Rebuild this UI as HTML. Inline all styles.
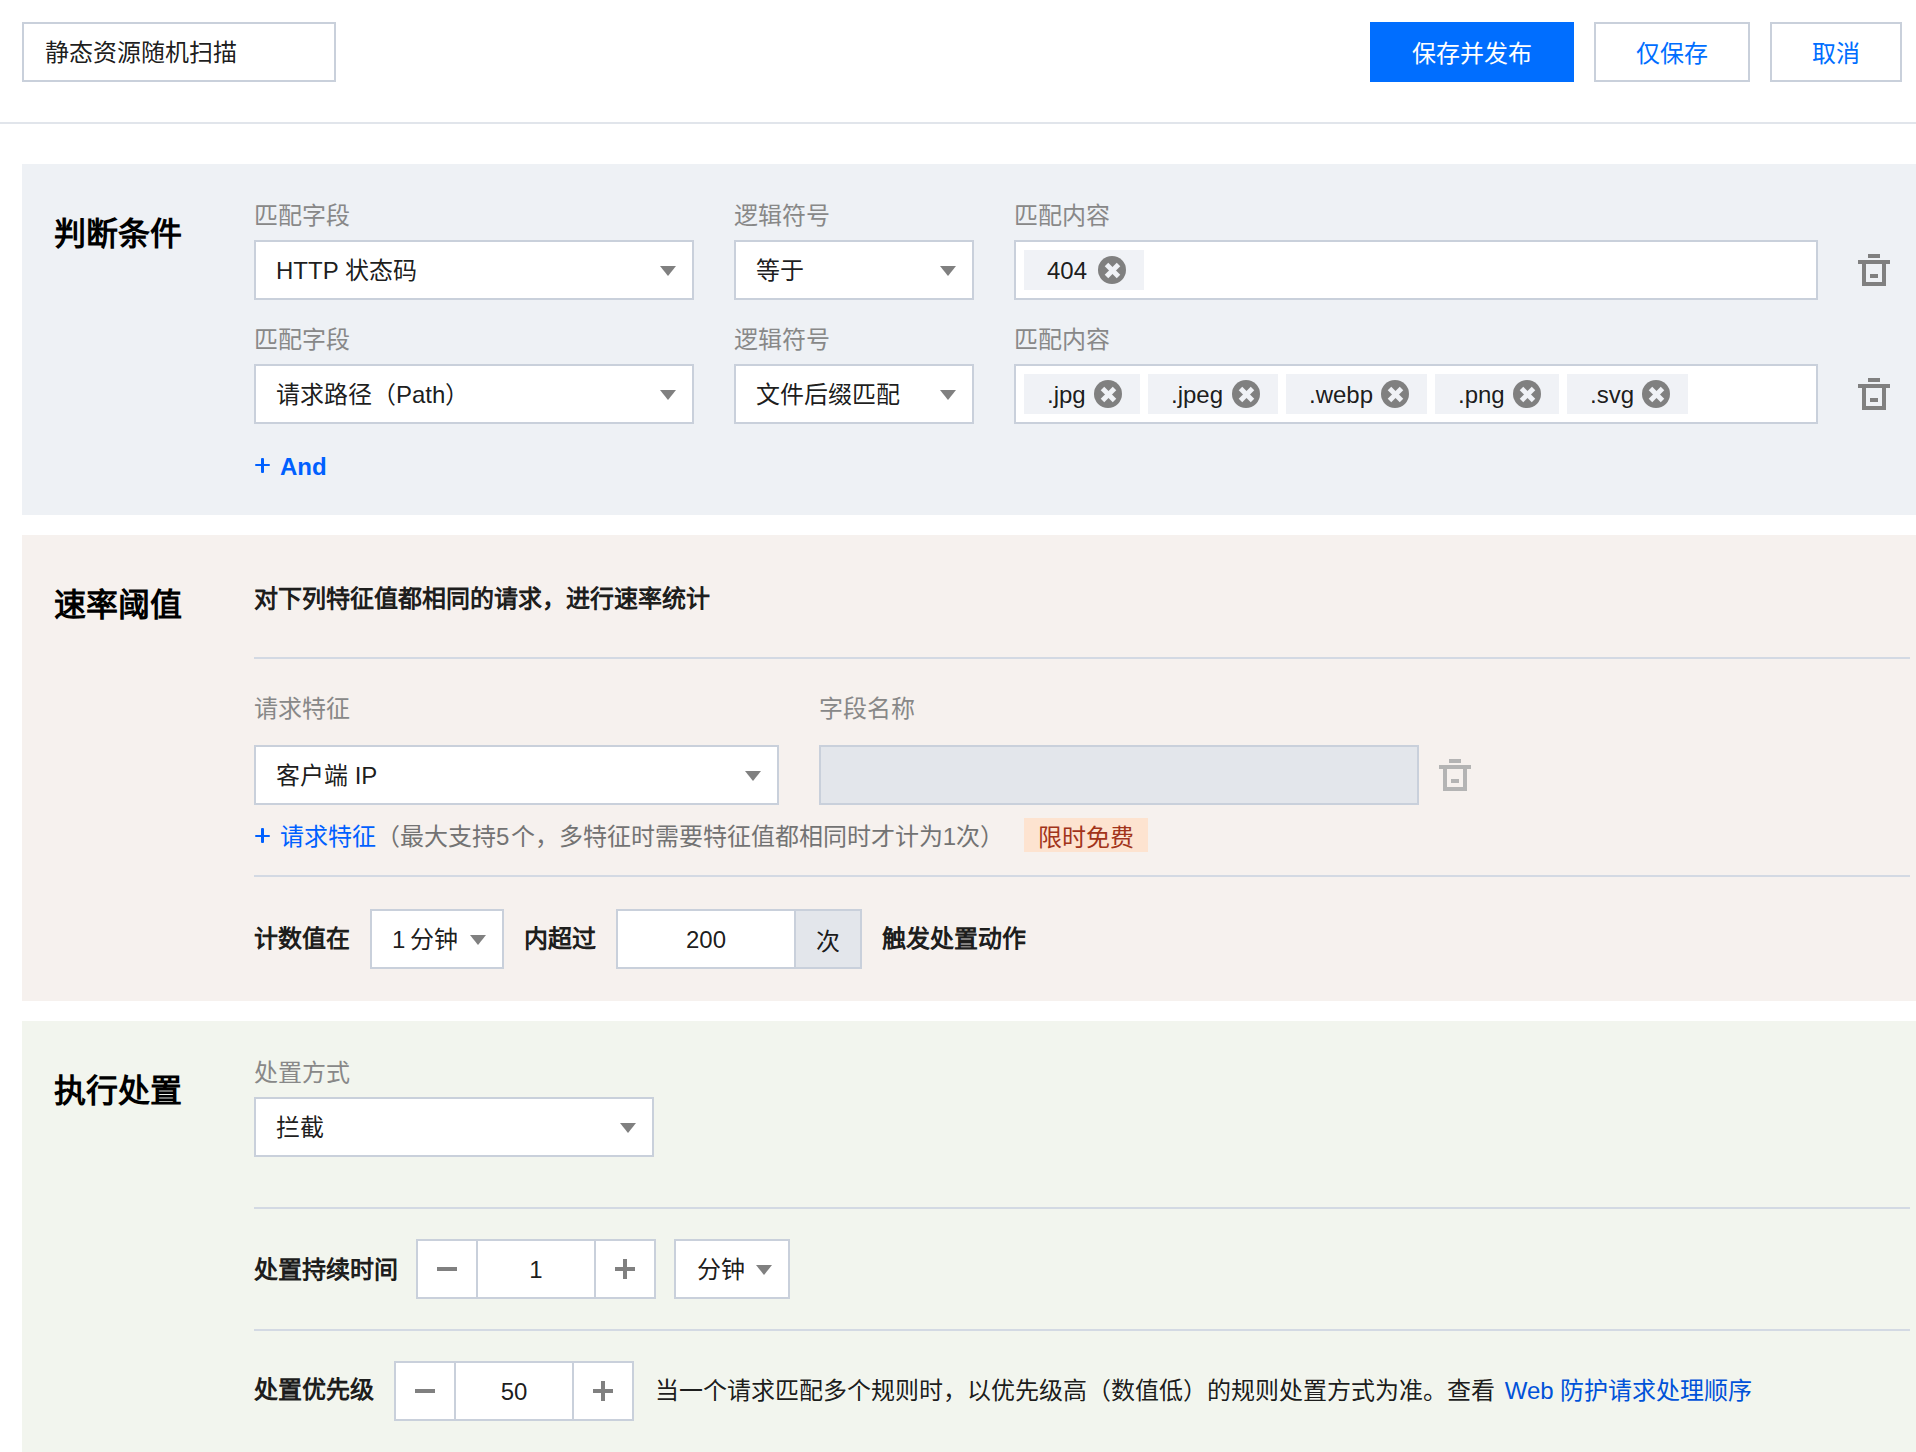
<!DOCTYPE html>
<html lang="zh-CN">
<head>
<meta charset="utf-8">
<style>
*{box-sizing:border-box;margin:0;padding:0}
html,body{width:1916px;height:1452px;overflow:hidden;background:#fff}
body{position:relative;font-family:"Liberation Sans",sans-serif;font-size:24px;color:rgba(0,0,0,.9)}
.a{position:absolute}
.box{position:absolute;border:2px solid #c9d0db;background:#fff;height:60px}
.t{position:absolute;white-space:nowrap;line-height:32px}
.lbl{color:#888}
.b{font-weight:bold}
.sec{position:absolute;left:22px;width:1894px}
.ttl{position:absolute;left:54px;font-size:32px;font-weight:bold;line-height:40px;white-space:nowrap;color:#000}
.hr{position:absolute;left:254px;width:1656px;height:2px;background:#d3d9e3}
.arr{position:absolute;width:0;height:0;border-left:8px solid transparent;border-right:8px solid transparent;border-top:10px solid #808080}
.tag{position:absolute;top:8px;height:40px;background:#f0f2f6}
.tag .t{top:5px;left:23px}
.x{position:absolute;top:6px;width:28px;height:28px;border-radius:50%;background:#808080}
.x:before,.x:after{content:"";position:absolute;left:5.5px;top:11.5px;width:17px;height:5px;background:#f0f2f6}
.x:before{transform:rotate(45deg)}
.x:after{transform:rotate(-45deg)}
.trash{position:absolute;width:32px;height:32px}
.link{color:#0060ff}
</style>
</head>
<body>
<!-- header -->
<div class="box" style="left:22px;top:22px;width:314px"><span class="t" style="left:21px;top:13px">静态资源随机扫描</span></div>
<div class="a" style="left:1370px;top:22px;width:204px;height:60px;background:#006eff;color:#fff;text-align:center;line-height:63px">保存并发布</div>
<div class="box" style="left:1594px;top:22px;width:156px;color:#006eff;text-align:center;line-height:59px">仅保存</div>
<div class="box" style="left:1770px;top:22px;width:132px;color:#006eff;text-align:center;line-height:59px">取消</div>
<div class="a" style="left:0;top:122px;width:1916px;height:2px;background:#e1e5eb"></div>

<!-- section 1 -->
<div class="sec" style="top:164px;height:351px;background:#eef1f5"></div>
<div class="ttl" style="top:214px">判断条件</div>

<div class="t lbl" style="left:254px;top:200px">匹配字段</div>
<div class="t lbl" style="left:734px;top:200px">逻辑符号</div>
<div class="t lbl" style="left:1014px;top:200px">匹配内容</div>
<div class="box" style="left:254px;top:240px;width:440px"><span class="t" style="left:20px;top:13px">HTTP 状态码</span><i class="arr" style="left:404px;top:24px"></i></div>
<div class="box" style="left:734px;top:240px;width:240px"><span class="t" style="left:20px;top:13px">等于</span><i class="arr" style="left:204px;top:24px"></i></div>
<div class="box" style="left:1014px;top:240px;width:804px">
  <div class="tag" style="left:8px;width:120px"><span class="t">404</span><i class="x" style="left:74px"></i></div>
</div>
<svg class="trash" style="left:1858px;top:254px" viewBox="0 0 32 32" fill="#808080"><rect x="10" y="0" width="12" height="4"/><rect x="0" y="6" width="32" height="4"/><path d="M4 10h4v18h16V10h4v22H4z"/><rect x="12" y="20" width="8" height="4"/></svg>

<div class="t lbl" style="left:254px;top:324px">匹配字段</div>
<div class="t lbl" style="left:734px;top:324px">逻辑符号</div>
<div class="t lbl" style="left:1014px;top:324px">匹配内容</div>
<div class="box" style="left:254px;top:364px;width:440px"><span class="t" style="left:20px;top:13px">请求路径（Path）</span><i class="arr" style="left:404px;top:24px"></i></div>
<div class="box" style="left:734px;top:364px;width:240px"><span class="t" style="left:20px;top:13px">文件后缀匹配</span><i class="arr" style="left:204px;top:24px"></i></div>
<div class="box" style="left:1014px;top:364px;width:804px">
  <div class="tag" style="left:8px;width:116px"><span class="t">.jpg</span><i class="x" style="left:70px"></i></div>
  <div class="tag" style="left:132px;width:130px"><span class="t">.jpeg</span><i class="x" style="left:84px"></i></div>
  <div class="tag" style="left:270px;width:141px"><span class="t">.webp</span><i class="x" style="left:95px"></i></div>
  <div class="tag" style="left:419px;width:124px"><span class="t">.png</span><i class="x" style="left:78px"></i></div>
  <div class="tag" style="left:551px;width:121px"><span class="t">.svg</span><i class="x" style="left:75px"></i></div>
</div>
<svg class="trash" style="left:1858px;top:378px" viewBox="0 0 32 32" fill="#808080"><rect x="10" y="0" width="12" height="4"/><rect x="0" y="6" width="32" height="4"/><path d="M4 10h4v18h16V10h4v22H4z"/><rect x="12" y="20" width="8" height="4"/></svg>

<i class="a" style="left:255px;top:463.5px;width:14.5px;height:2.5px;background:#0060ff;border-radius:1px"></i><i class="a" style="left:261px;top:458px;width:2.5px;height:14.5px;background:#0060ff;border-radius:1px"></i><div class="t link" style="left:280px;top:451px;font-weight:bold">And</div>

<!-- section 2 -->
<div class="sec" style="top:535px;height:466px;background:#f6f1ee"></div>
<div class="ttl" style="top:585px">速率阈值</div>
<div class="t b" style="left:254px;top:583px">对下列特征值都相同的请求，进行速率统计</div>
<div class="hr" style="top:657px"></div>
<div class="t lbl" style="left:254px;top:693px">请求特征</div>
<div class="t lbl" style="left:819px;top:693px">字段名称</div>
<div class="box" style="left:254px;top:745px;width:525px"><span class="t" style="left:20px;top:13px">客户端 IP</span><i class="arr" style="left:489px;top:24px"></i></div>
<div class="box" style="left:819px;top:745px;width:600px;background:#e3e6eb"></div>
<svg class="trash" style="left:1439px;top:759px" viewBox="0 0 32 32" fill="#b4b4b4"><rect x="10" y="0" width="12" height="4"/><rect x="0" y="6" width="32" height="4"/><path d="M4 10h4v18h16V10h4v22H4z"/><rect x="12" y="20" width="8" height="4"/></svg>
<i class="a" style="left:255px;top:834.5px;width:14.5px;height:2.5px;background:#0060ff;border-radius:1px"></i><i class="a" style="left:261px;top:828px;width:2.5px;height:15px;background:#0060ff;border-radius:1px"></i><div class="t" style="left:280px;top:821px"><span class="link">请求特征</span><span style="color:#737373">（最大支持<span style="margin-right:1.5px">5</span>个，多特征时需要特征值都相同时才计为1次）</span></div>
<div class="a" style="left:1024px;top:818px;width:124px;height:34px;background:#fde3d0;color:#a2341a;text-align:center;line-height:39px">限时免费</div>
<div class="hr" style="top:875px"></div>

<div class="t b" style="left:254px;top:923px">计数值在</div>
<div class="box" style="left:370px;top:909px;width:134px"><span class="t" style="left:20px;top:13px">1<span style="margin-left:-2px"> 分钟</span></span><i class="arr" style="left:98px;top:24px"></i></div>
<div class="t b" style="left:524px;top:923px">内超过</div>
<div class="box" style="left:616px;top:909px;width:246px"><span class="t" style="left:0;width:176px;text-align:center;top:13px">200</span><div class="a" style="left:176px;top:0;width:66px;height:56px;background:#e3e6eb;border-left:2px solid #c9d0db;text-align:center;line-height:61px;padding-left:0">次</div></div>
<div class="t b" style="left:882px;top:923px">触发处置动作</div>

<!-- section 3 -->
<div class="sec" style="top:1021px;height:431px;background:#f2f5ee"></div>
<div class="ttl" style="top:1071px">执行处置</div>
<div class="t lbl" style="left:254px;top:1057px">处置方式</div>
<div class="box" style="left:254px;top:1097px;width:400px"><span class="t" style="left:20px;top:13px">拦截</span><i class="arr" style="left:364px;top:24px"></i></div>
<div class="hr" style="top:1207px"></div>

<div class="t b" style="left:254px;top:1254px">处置持续时间</div>
<div class="box" style="left:416px;top:1239px;width:240px">
  <div class="a" style="left:58px;top:0;width:2px;height:56px;background:#c9d0db"></div>
  <div class="a" style="left:176px;top:0;width:2px;height:56px;background:#c9d0db"></div>
  <div class="a" style="left:19px;top:26px;width:20px;height:4px;background:#808080"></div>
  <span class="t" style="left:60px;width:116px;text-align:center;top:13px">1</span>
  <div class="a" style="left:197px;top:26px;width:20px;height:4px;background:#808080"></div>
  <div class="a" style="left:205px;top:18px;width:4px;height:20px;background:#808080"></div>
</div>
<div class="box" style="left:674px;top:1239px;width:116px"><span class="t" style="left:21px;top:13px">分钟</span><i class="arr" style="left:80px;top:24px"></i></div>
<div class="hr" style="top:1329px"></div>

<div class="t b" style="left:254px;top:1374px">处置优先级</div>
<div class="box" style="left:394px;top:1361px;width:240px">
  <div class="a" style="left:58px;top:0;width:2px;height:56px;background:#c9d0db"></div>
  <div class="a" style="left:176px;top:0;width:2px;height:56px;background:#c9d0db"></div>
  <div class="a" style="left:19px;top:26px;width:20px;height:4px;background:#808080"></div>
  <span class="t" style="left:60px;width:116px;text-align:center;top:13px">50</span>
  <div class="a" style="left:197px;top:26px;width:20px;height:4px;background:#808080"></div>
  <div class="a" style="left:205px;top:18px;width:4px;height:20px;background:#808080"></div>
</div>
<div class="t" style="left:655px;top:1375px">当一个请求匹配多个规则时，以优先级高（数值低）的规则处置方式为准。查看 <span style="color:#0052d9;margin-left:3px">Web 防护请求处理顺序</span></div>
</body>
</html>
